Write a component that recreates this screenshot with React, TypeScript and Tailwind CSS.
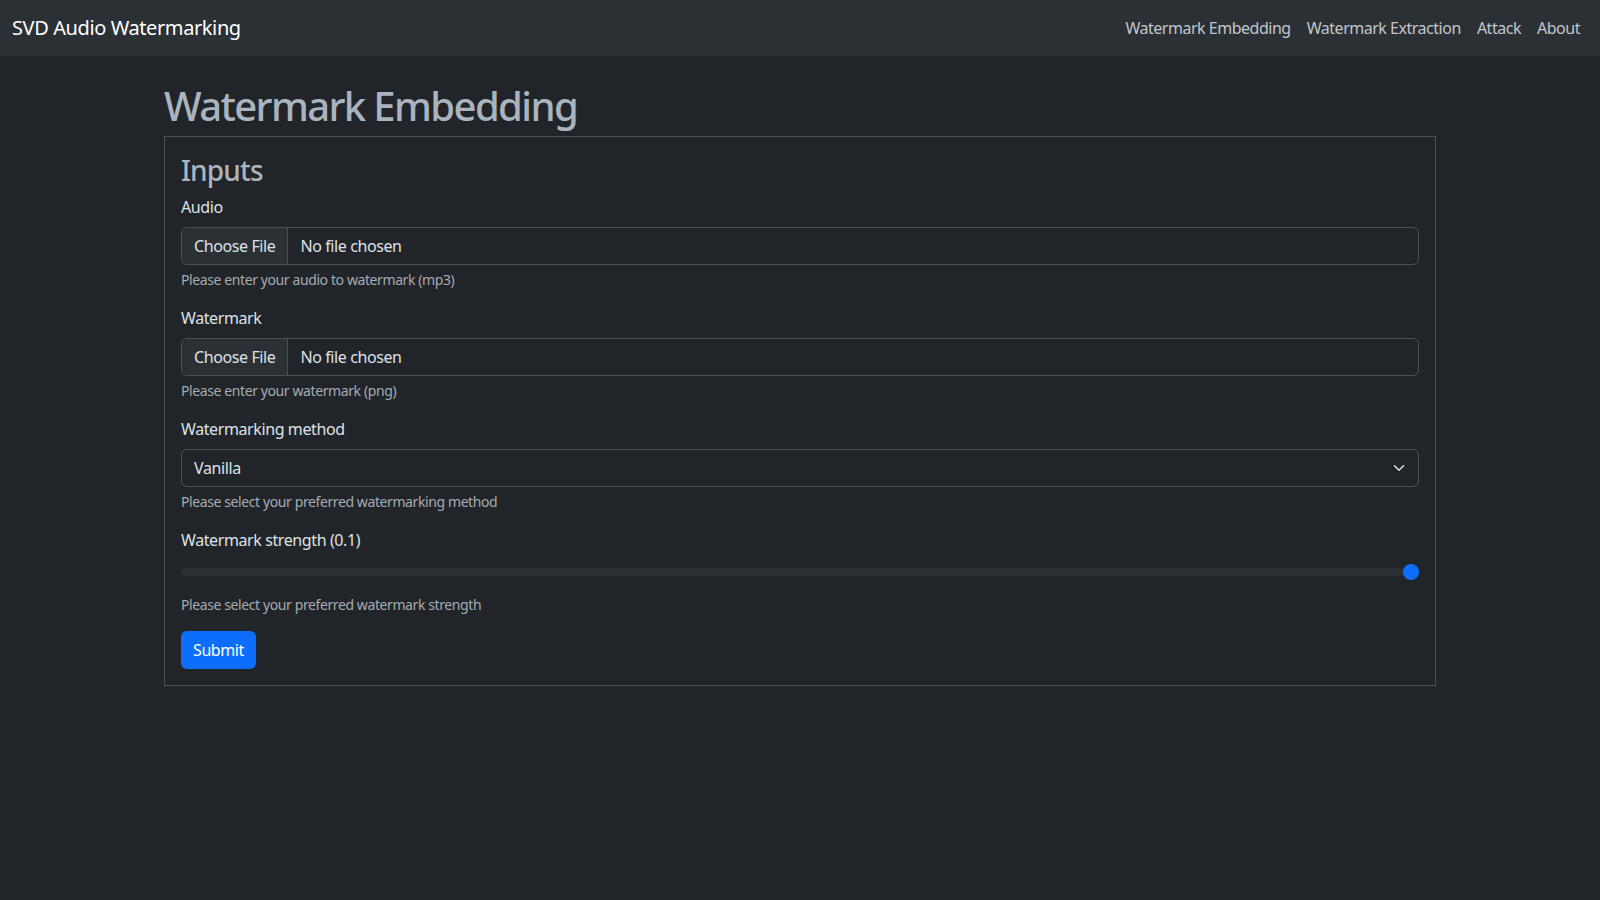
import { useState } from "react"

const links = ["Watermark Embedding", "Watermark Extraction", "Attack", "About"]

function Chevron() {
  return (
    <svg viewBox="0 0 16 16" className="h-3 w-4" fill="none" stroke="#dee2e6" strokeWidth="2" strokeLinecap="round" strokeLinejoin="round">
      <path d="m2 5 6 6 6-6" />
    </svg>
  )
}

function FileField({ label, help }: { label: string; help: string }) {
  const [name, setName] = useState("")
  return (
    <div className="mb-4">
      <div className="mb-2 text-base leading-6">{label}</div>
      <label className="flex h-[38px] w-full cursor-pointer items-stretch overflow-hidden rounded-md border border-[#495057] bg-[#212529]">
        <span className="flex items-center border-r border-[#495057] bg-[#2b3035] px-3">Choose File</span>
        <span className="flex items-center px-3">{name || "No file chosen"}</span>
        <input type="file" className="hidden" onChange={(e) => setName(e.target.files?.[0]?.name ?? "")} />
      </label>
      <div className="mt-1 text-sm leading-[21px] text-[#a5abb1]">{help}</div>
    </div>
  )
}

export default function App() {
  const [method, setMethod] = useState("Vanilla")
  const [strength, setStrength] = useState(0.1)

  return (
    <div className="min-h-screen bg-[#212529] font-['Noto_Sans',sans-serif] tracking-[-0.025em] text-[#dee2e6]">
      <nav className="flex h-14 items-center justify-between bg-[#2b3035] px-3">
        <span className="text-xl text-white">SVD Audio Watermarking</span>
        <div className="flex">
          {links.map((l) => (
            <a key={l} href="#" className="px-2 py-2 text-base tracking-[-0.03em] text-[#c2c6ca] hover:text-white">
              {l}
            </a>
          ))}
        </div>
      </nav>

      <main className="mx-auto w-[1272px] pt-[26px]">
        <h1 className="mb-[6px] text-[40px] font-medium leading-[48px] tracking-[-0.04em] text-[#aab4be]">Watermark Embedding</h1>

        <div className="border border-[#495057] p-4">
          <h3 className="mb-2 text-[28px] font-medium leading-[34px] tracking-[-0.03em] text-[#aab4be]">Inputs</h3>

          <FileField label="Audio" help="Please enter your audio to watermark (mp3)" />
          <FileField label="Watermark" help="Please enter your watermark (png)" />

          <div className="mb-4">
            <div className="mb-2 leading-6">Watermarking method</div>
            <div className="relative">
              <select
                value={method}
                onChange={(e) => setMethod(e.target.value)}
                className="h-[38px] w-full appearance-none rounded-md border border-[#495057] bg-[#212529] pl-3 pr-9 text-[#dee2e6] outline-none"
              >
                <option>Vanilla</option>
                <option>Hybrid</option>
              </select>
              <span className="pointer-events-none absolute right-3 top-[13px]">
                <Chevron />
              </span>
            </div>
            <div className="mt-1 text-sm leading-[21px] text-[#a5abb1]">Please select your preferred watermarking method</div>
          </div>

          <div className="mb-4">
            <div className="mb-2 leading-6">Watermark strength ({strength})</div>
            <input
              type="range"
              min={0}
              max={0.1}
              step={0.01}
              value={strength}
              onChange={(e) => setStrength(Number(e.target.value))}
              className="block h-6 w-full cursor-pointer appearance-none bg-transparent [&::-webkit-slider-runnable-track]:h-2 [&::-webkit-slider-runnable-track]:rounded-full [&::-webkit-slider-runnable-track]:bg-[#2b3035] [&::-webkit-slider-thumb]:-mt-1 [&::-webkit-slider-thumb]:h-4 [&::-webkit-slider-thumb]:w-4 [&::-webkit-slider-thumb]:appearance-none [&::-webkit-slider-thumb]:rounded-full [&::-webkit-slider-thumb]:bg-[#0d6efd]"
            />
            <div className="mt-[10px] text-sm leading-[21px] text-[#a5abb1]">Please select your preferred watermark strength</div>
          </div>

          <button className="h-[38px] rounded-md bg-[#0d6efd] px-3 text-white hover:bg-[#0b5ed7]">Submit</button>
        </div>
      </main>
    </div>
  )
}
